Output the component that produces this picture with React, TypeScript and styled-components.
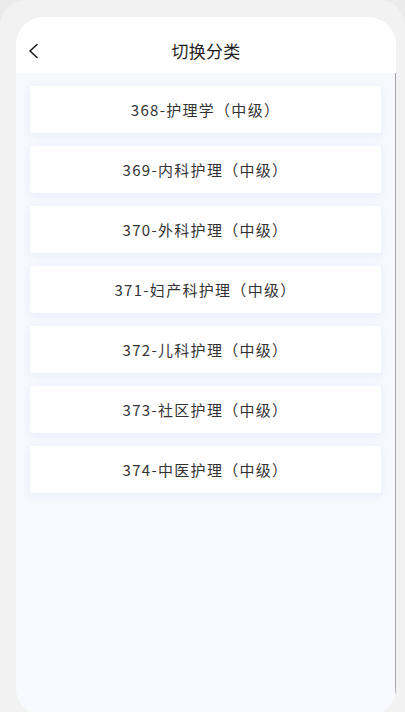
import React from 'react';
import styled, { createGlobalStyle } from 'styled-components';

const GlobalStyle = createGlobalStyle`
  html, body {
    margin: 0;
    padding: 0;
    background: #ebebeb;
    font-family: "Noto Sans CJK SC", "Noto Sans", sans-serif;
  }
`;

const categories = [
  '368-护理学（中级）',
  '369-内科护理（中级）',
  '370-外科护理（中级）',
  '371-妇产科护理（中级）',
  '372-儿科护理（中级）',
  '373-社区护理（中级）',
  '374-中医护理（中级）',
];

const App: React.FC = () => {
  return (
    <>
      <GlobalStyle />
      <Backdrop>
        <Sheet>
          <Header>
            <BackButton aria-label="返回">
              <svg width="12" height="16" viewBox="0 0 12 16" fill="none">
                <path
                  d="M10 1.5 L3 8 L10 14.5"
                  stroke="#1a1a1a"
                  strokeWidth="1.6"
                  strokeLinecap="round"
                  strokeLinejoin="round"
                />
              </svg>
            </BackButton>
            <Title>切换分类</Title>
          </Header>
          <List>
            {categories.map((name) => (
              <Item key={name}>{name}</Item>
            ))}
          </List>
        </Sheet>
      </Backdrop>
    </>
  );
};

export default App;

const Backdrop = styled.div`
  height: 712px;
  overflow: hidden;
  background: #f2f2f2;
  border-radius: 26px 26px 0 0;
  padding: 17px 9px 0 16px;
  box-sizing: border-box;
`;

const Sheet = styled.div`
  height: 699px;
  width: 380px;
  border-radius: 28px;
  overflow: hidden;
  display: flex;
  flex-direction: column;
  background: #f8f9fe;
`;

const Header = styled.div`
  position: relative;
  height: 56px;
  flex-shrink: 0;
  background: #ffffff;
  display: flex;
  align-items: center;
  justify-content: center;
`;

const BackButton = styled.button`
  position: absolute;
  left: 11px;
  top: 26px;
  padding: 0;
  border: 0;
  background: none;
  display: flex;
`;

const Title = styled.h1`
  margin: 0;
  font-size: 17px;
  font-weight: 400;
  color: #1f1f1f;
  line-height: 1;
  padding-top: 10px;
  letter-spacing: 0.3px;
`;

const List = styled.div`
  flex: 1;
  display: flex;
  flex-direction: column;
  gap: 13px;
  padding: 13px 14px;
  border-right: 1px solid #a8a8a8;
`;

const Item = styled.div`
  height: 47px;
  background: #ffffff;
  border-radius: 2px;
  box-shadow: 0 2px 8px rgba(196, 208, 240, 0.35);
  display: flex;
  align-items: center;
  justify-content: center;
  font-size: 15px;
  letter-spacing: 1.3px;
  color: #333333;
`;
